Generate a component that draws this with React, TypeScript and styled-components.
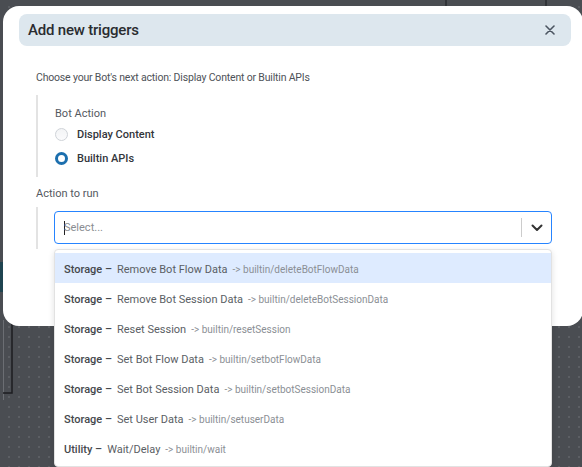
import styled, { createGlobalStyle } from "styled-components";

const GlobalStyle = createGlobalStyle`
  html, body {
    margin: 0;
    padding: 0;
  }
  body {
    font-family: Roboto, "Liberation Sans", sans-serif;
    background: #4a4d52;
  }
`;

const options = [
  { group: "Storage", label: "Remove Bot Flow Data", path: "builtin/deleteBotFlowData" },
  { group: "Storage", label: "Remove Bot Session Data", path: "builtin/deleteBotSessionData" },
  { group: "Storage", label: "Reset Session", path: "builtin/resetSession" },
  { group: "Storage", label: "Set Bot Flow Data", path: "builtin/setbotFlowData" },
  { group: "Storage", label: "Set Bot Session Data", path: "builtin/setbotSessionData" },
  { group: "Storage", label: "Set User Data", path: "builtin/setuserData" },
  { group: "Utility", label: "Wait/Delay", path: "builtin/wait" },
];

const App = () => {
  return (
    <>
      <GlobalStyle />
      <S.Page>
        <S.Canvas>
          <svg width="582" height="467">
            <line x1="446" y1="0" x2="446" y2="6" stroke="#2a2c30" strokeWidth="1.5" />
            <line x1="546" y1="0" x2="546" y2="6" stroke="#2a2c30" strokeWidth="1.5" />
            <line x1="3.5" y1="320" x2="3.5" y2="400" stroke="#6b6e73" strokeWidth="1" />
            <polyline points="12,320 12,393 3,393" fill="none" stroke="#1c1d20" strokeWidth="1.5" />
            <rect x="0" y="262" width="3" height="30" fill="#1f4450" />
          </svg>
        </S.Canvas>
        <S.Modal>
          <S.Header>
            <S.Title>Add new triggers</S.Title>
            <S.Close aria-label="close">
              <svg width="10" height="10" viewBox="0 0 10 10">
                <path d="M1 1L9 9M9 1L1 9" stroke="#4b5561" strokeWidth="1.6" strokeLinecap="round" />
              </svg>
            </S.Close>
          </S.Header>
          <S.Body>
            <S.Intro>Choose your Bot's next action: Display Content or Builtin APIs</S.Intro>
            <S.Indent>
              <S.FieldLabel>Bot Action</S.FieldLabel>
              <S.RadioRow>
                <S.Radio />
                <S.RadioText>Display Content</S.RadioText>
              </S.RadioRow>
              <S.RadioRow>
                <S.Radio checked />
                <S.RadioText>Builtin APIs</S.RadioText>
              </S.RadioRow>
            </S.Indent>
            <S.SectionLabel>Action to run</S.SectionLabel>
            <S.SelectIndent>
              <S.SelectBox>
                <S.Placeholder>
                  <S.Caret />
                  Select...
                </S.Placeholder>
                <S.Separator />
                <S.Chevron>
                  <svg width="12" height="8" viewBox="0 0 12 8">
                    <path d="M1.5 1.5L6 6L10.5 1.5" fill="none" stroke="#333" strokeWidth="2" strokeLinecap="round" strokeLinejoin="round" />
                  </svg>
                </S.Chevron>
              </S.SelectBox>
              <S.Menu>
                {options.map((o, i) => (
                  <S.Option key={o.path} active={i === 0}>
                    <S.Group>{o.group} –</S.Group>
                    <S.OptionLabel>{o.label}</S.OptionLabel>
                    <S.Path>-&gt; {o.path}</S.Path>
                  </S.Option>
                ))}
              </S.Menu>
            </S.SelectIndent>
          </S.Body>
        </S.Modal>
      </S.Page>
    </>
  );
};

const S = {
  Page: styled.div`
    position: relative;
    width: 582px;
    height: 467px;
    overflow: hidden;
    background-color: #4a4d52;
    background-image: radial-gradient(circle, #5b5e63 1px, transparent 1.2px);
    background-size: 10px 10px;
    background-position: 4px 2px;
  `,

  Canvas: styled.div`
    position: absolute;
    inset: 0;
    pointer-events: none;
    svg {
      display: block;
    }
  `,

  Modal: styled.div`
    position: relative;
    margin: 6px 0 0 3px;
    width: 580px;
    height: 320px;
    background: #fff;
    border-radius: 16px;
    box-sizing: border-box;
    padding: 8px 12px 0 16px;
  `,

  Header: styled.div`
    display: flex;
    align-items: center;
    justify-content: space-between;
    height: 32px;
    background: #dde7ee;
    border-radius: 8px;
    padding: 0 16px 0 9px;
  `,

  Title: styled.h2`
    margin: 0;
    font-size: 15px;
    font-weight: 500;
    color: #2a2c30;
    letter-spacing: -0.2px;
  `,

  Close: styled.span`
    display: flex;
    align-items: center;
  `,

  Body: styled.div`
    padding: 25px 0 0 17px;
  `,

  Intro: styled.p`
    margin: 0;
    height: 13px;
    line-height: 13px;
    font-size: 10.5px;
    color: #4e5258;
    letter-spacing: -0.18px;
  `,

  Indent: styled.div`
    margin-top: 11px;
    border-left: 2px solid #e3e3e3;
    padding: 12px 0 7px 17px;
    display: flex;
    flex-direction: column;
  `,

  FieldLabel: styled.div`
    height: 13px;
    line-height: 13px;
    font-size: 11px;
    color: #55595f;
    margin-bottom: 2px;
  `,

  RadioRow: styled.label`
    display: flex;
    align-items: center;
    gap: 9px;
    height: 24px;
  `,

  Radio: styled.span<{ checked?: boolean }>`
    width: 13px;
    height: 13px;
    border-radius: 50%;
    box-sizing: border-box;
    ${({ checked }) =>
      checked
        ? `background: #fff; border: 3.5px solid #1c6fae;`
        : `background: linear-gradient(#f3f4f6, #fbfbfc); border: 1px solid #cfd3d8;`}
  `,

  RadioText: styled.span`
    font-size: 11px;
    font-weight: 500;
    color: #33363b;
  `,

  SectionLabel: styled.div`
    margin-top: 10px;
    height: 13px;
    line-height: 13px;
    font-size: 11px;
    color: #55595f;
  `,

  SelectIndent: styled.div`
    position: relative;
    margin-top: 7px;
    border-left: 2px solid #e3e3e3;
    padding: 4px 0 5px 16px;
  `,

  SelectBox: styled.div`
    display: flex;
    align-items: center;
    width: 498px;
    height: 33px;
    box-sizing: border-box;
    border: 1.5px solid #2684ff;
    border-radius: 4px;
    padding: 0 0 0 9px;
  `,

  Placeholder: styled.div`
    flex: 1;
    display: flex;
    align-items: center;
    font-size: 11px;
    color: #8a8d92;
  `,

  Caret: styled.span`
    width: 1px;
    height: 14px;
    background: #222;
    margin-right: -1px;
  `,

  Separator: styled.span`
    width: 1px;
    height: 19px;
    background: #ccc;
  `,

  Chevron: styled.span`
    width: 29px;
    display: flex;
    justify-content: center;
    align-items: center;
  `,

  Menu: styled.div`
    position: absolute;
    left: 16px;
    top: 42px;
    width: 498px;
    box-sizing: border-box;
    background: #fff;
    border-radius: 4px;
    border: 1px solid #e2e2e2;
    box-shadow: 0 2px 6px rgba(0, 0, 0, 0.12);
    padding: 3px 0;
    z-index: 2;
  `,

  Option: styled.div<{ active?: boolean }>`
    display: flex;
    align-items: baseline;
    height: 30px;
    box-sizing: border-box;
    padding: 3px 0 0 9px;
    line-height: 27px;
    background: ${({ active }) => (active ? "#deebff" : "#fff")};
    white-space: nowrap;
  `,

  Group: styled.span`
    font-size: 11px;
    font-weight: 500;
    color: #45484d;
    margin-right: 5px;
  `,

  OptionLabel: styled.span`
    font-size: 11px;
    color: #5a5e64;
    margin-right: 5px;
  `,

  Path: styled.span`
    font-size: 10px;
    color: #8b8f95;
  `,
};

export default App;
